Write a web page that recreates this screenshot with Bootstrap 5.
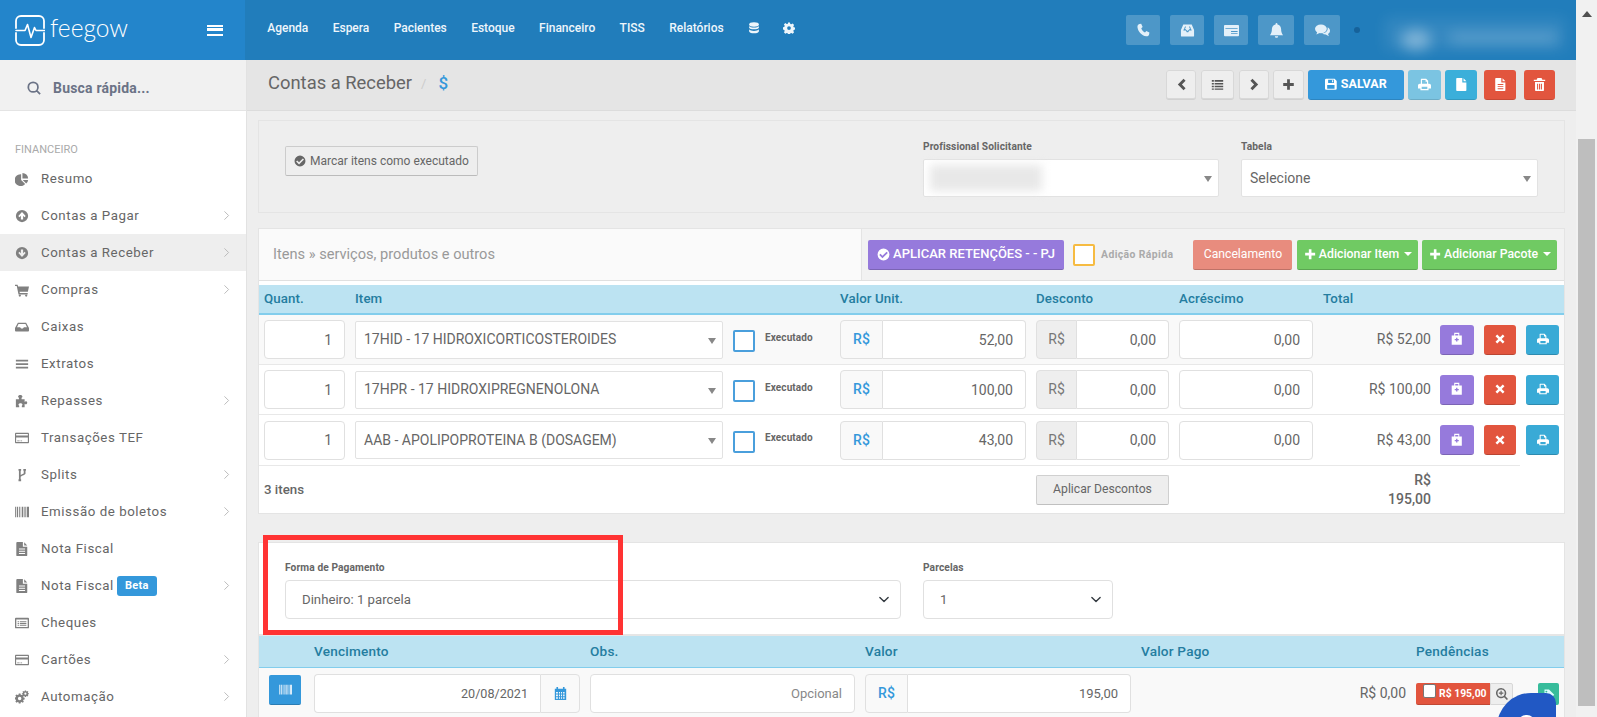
<!DOCTYPE html>
<html lang="pt-BR">
<head>
<meta charset="utf-8">
<title>Contas a Receber</title>
<link rel="stylesheet" href="https://cdn.jsdelivr.net/npm/bootstrap@5.3.0/dist/css/bootstrap.min.css">
<style>
html,body{height:100%;overflow:hidden}
body{font-family:Roboto,"Liberation Sans",sans-serif;font-size:13px;color:#666;background:#eee}
.ic{width:1em;height:1em;fill:currentColor;flex:none;display:inline-block;vertical-align:-.125em}
.shell{height:717px;width:1597px}
.frame{width:1576px;flex:none}
.fake-scroll{width:21px;background:#f1f1f1;flex:none;position:relative}
.fake-scroll i{display:block;width:0;height:0;border:5px solid transparent;border-bottom:6px solid #505050;border-top:0;margin:11px auto 0}
.fake-thumb{position:absolute;left:2px;width:17px;top:139px;height:567px;background:#bebebe}
.top-bar{height:60px;background:#217dbb;flex:none}
.brand-box{width:245px;background:#2385cb;color:#fff;padding-left:15px;padding-right:22px}
.brand-name{font-family:Lato,Roboto,sans-serif;font-weight:300;font-size:24.5px;line-height:1;margin-left:5px;padding-bottom:3px}
.burger{width:16px;height:11px;border-top:2.5px solid #fff;border-bottom:2.5px solid #fff;position:relative}
.burger::after{content:"";position:absolute;left:0;right:0;top:1.75px;height:2.5px;background:#fff}
.top-links{padding-left:10px;gap:0}
.top-links .nav-link{color:#eef6fb;font-size:12px;font-weight:500;padding:0 12.2px;line-height:60px;white-space:nowrap;margin-top:-2px}
.top-links .nav-link .ic{font-size:12px}
.top-tools{position:absolute;left:1126px;top:15px;gap:10px}
.tool-btn{height:30px;width:34px;background:rgba(255,255,255,.2);border-radius:2px;color:#e3f0f9;font-size:15px}
.dot-state{width:6px;height:6px;border-radius:50%;background:#16629a;margin:0 0 0 4px;align-self:center}
.blur-a,.blur-b,.blur-c{position:absolute;display:block;filter:blur(7px)}
.blur-a{left:1385px;top:18px;width:180px;height:32px;background:rgba(255,255,255,.09)}
.blur-b{left:1401px;top:30px;width:30px;height:20px;background:rgba(255,255,255,.38);border-radius:50%}
.blur-c{left:1450px;top:33px;width:106px;height:10px;background:rgba(255,255,255,.2)}
.side-col{width:247px;flex:none;background:#fff;border-right:1px solid #e2e2e2}
.quick-find{height:51px;background:#f1f1f1;border-bottom:1px solid #e4e4e4;padding-left:27px;padding-top:6px;color:#6b7386;font-weight:700;font-size:14px;gap:12px;letter-spacing:.2px}
.quick-find .ic{font-size:14px;color:#6b7386}
.side-title{font-size:11px;color:#aaa;padding:31px 0 0 15px;line-height:16px;height:50px;margin-bottom:-1px}
.side-item{height:37px;padding:0 15px;gap:0;color:#666;letter-spacing:.55px;font-size:13.3px;white-space:nowrap;text-decoration:none}
.side-item.is-on{background:#eee}
.side-ico{width:26px;flex:none;color:#808080;font-size:14px;display:flex}
.side-arrow{margin-left:auto;color:#b5b5b5;font-size:11px;margin-right:-1px}
.side-beta{background:#3498db;color:#fff;font-weight:700;font-size:11px;border-radius:3px;padding:0 8px;height:20px;line-height:20px;margin-left:3px;letter-spacing:.3px}
.content{flex:1;min-width:0}
.crumbs{height:51px;background:#e5e5e5;border-bottom:1px solid #dcdcdc;padding-left:21px;flex:none}
.crumb-title{font-size:18.4px;color:#666;margin-top:-5px}
.crumb-sep{color:#ccc;margin:-3px 12px 0 9px;font-size:13px}
.crumb-sym{color:#3498db;font-size:17px;font-weight:500;margin-top:-3px}
.act-row{position:absolute;left:1166px;top:70px;gap:4px}
.act{height:30px;padding:0;border-radius:3px;border:0;border-bottom:1px solid rgba(0,0,0,.12);color:#fff;font-size:13px;display:flex;align-items:center;justify-content:center}
.act-plain{background:#eee;color:#555;box-shadow:inset 0 0 0 1px #d8d8d8}
.w30{width:30px}.w33{width:33px}.w31{width:31px}.w32{width:32px}
.act-save{width:96px;background:#3498db;font-weight:700;font-size:12.5px;gap:3px}
.act-print{background:#7bc4e2}
.act-info{background:#3bafda}
.act-red{background:#e2553e}
.sheet{margin:0 11px;border:1px solid #e4e4e4;flex:none}
.sheet-a{margin-top:9px;height:93px;padding:19px 26px 0;background:#eee;display:grid;grid-template-columns:616px 296px 297px;column-gap:22px;align-items:start}
.mark-btn{align-self:start;width:193px;height:30px;padding:0;margin-top:6px;background:#eee;border:1px solid #ccc;border-bottom-color:#bbb;border-radius:2px;color:#666;font-size:12px;gap:4px}
.mini-label{font-size:10.2px;font-weight:700;color:#666;line-height:14px;margin:0 0 5px;display:block;letter-spacing:.1px}
.s2box{height:38px;background:#fff;border:1px solid #e2e2e2;border-radius:2px;padding-left:8px;position:relative;font-size:14px;color:#666;white-space:nowrap}
.s2box::after{content:"";position:absolute;right:6px;top:50%;margin-top:-2px;border-style:solid;border-color:#888 transparent transparent;border-width:6px 4.5px 0}
.smudge{display:block;width:112px;height:26px;background:#e8e8e8;filter:blur(5px);margin-left:-2px}
.sheet-b{margin-top:15px;background:#fff;height:286px}
.sheet-head{height:52px;border-bottom:1px solid #e0e0e0;background:#fafafa}
.sheet-head-txt{flex:1;padding-left:14px;font-size:14.6px;color:#999;padding-top:1px}
.sheet-head-tools{width:703px;background:#f2f2f2;border-left:1px solid #e4e4e4;padding-left:6px;gap:0}
.tbtn{height:30px;border:0;border-bottom:1px solid rgba(0,0,0,.18);border-radius:2px;color:#fff;font-size:12.3px;padding:0;display:flex;align-items:center;justify-content:center;gap:3px;white-space:nowrap}
.tbtn-purple{width:196px;background:#967adc;font-weight:500;font-size:13px}
.tbtn-cancel{width:99px;background:#e88c7e;margin-left:20px;font-weight:400;font-size:12.2px}
.tbtn-item{width:121px;background:#70ca63;margin-left:5px;font-weight:500}
.tbtn-pack{width:135px;background:#70ca63;margin-left:4px;font-weight:500}
.caret-mini{border:4px solid transparent;border-top:4px solid #fff;border-bottom:0;margin-left:2px}
.box-orange{width:22px;height:22px;border:2px solid #f6bb42;background:#fff;border-radius:2px;margin-left:9px;flex:none}
.quick-lbl{font-size:10.4px;font-weight:700;color:#aaa;margin-left:6px;letter-spacing:.4px;white-space:nowrap}
.gridline{display:grid;grid-template-columns:81px 368px 97px 186px 133px 134px 108px 118px;column-gap:10px;padding-left:5px;align-items:center}
.thead-line{margin-top:4px;height:30px;background:#bce3f2;border-bottom:2px solid #82cdec;color:#247da0;font-weight:500;font-size:13.3px;letter-spacing:.1px}
.tline{height:50px;border-bottom:1px solid #e8e8e8}
.tline.alt{background:#f9f9f9}
.tline.last{border-bottom:0}
.tfoot-line{height:48px;border-top:1px solid #e8e8e8;margin-right:44px;font-size:13.3px}
.fld{height:39px;border:1px solid #e0e0e0;border-radius:4px;background:#fff;color:#666;font-size:14px;text-align:right;padding:0 12px;box-shadow:none;line-height:37px}
.fld::placeholder{color:#888;opacity:1}
.fld-small{font-size:13px}
.fld-group{height:39px;flex-wrap:nowrap}
.fld-group .fld{border-radius:0 4px 4px 0;border-left:0;flex:1;min-width:0;margin-left:0 !important}
.pre{width:43px;height:39px;flex:none;background:#f9f9f9;border:1px solid #e0e0e0;border-radius:4px 0 0 4px;display:flex;align-items:center;justify-content:center;color:#3498db;font-weight:500;font-size:14px}
.pre.grey{width:41px;background:#eee;color:#777;font-weight:400}
.blue-box{width:22px;height:22px;border:2px solid #4a9fdc;border-radius:2px;background:#fff;flex:none;margin-top:3px}
.exec-lbl{font-size:10px;font-weight:700;color:#666;margin-left:10px;margin-top:-5px;letter-spacing:.1px}
.row-total{text-align:right;font-size:14px;color:#666}
.mini-act{height:30px;border:0;border-bottom:1px solid rgba(0,0,0,.18);border-radius:3px;color:#fff;padding:0;font-size:12px;display:flex;align-items:center;justify-content:center}
.act-trio{margin-left:-1px}
.bg-purple{background:#967adc;width:34px;font-size:13.5px}.bg-red{background:#e2553e;width:32px;margin-left:10px}.bg-info2{background:#39aad6;width:33px;margin-left:10px}
.apply-btn{height:30px;background:#eee;border:1px solid #d0d0d0;border-bottom-color:#c0c0c0;border-radius:2px;color:#666;font-size:12.2px;padding:0}
.sum-cell{text-align:right;font-size:14px;line-height:19px;font-weight:500;color:#666}
.sheet-c{margin:28px 11px 0;background:#fff;border:1px solid #e4e4e4;border-bottom:0;height:300px;flex:none}
.pay-top{height:93px;padding:18px 26px 0;display:grid;grid-template-columns:616px 190px;column-gap:22px;border-bottom:2px solid #e6e6e6}
.plain-select{height:39px;border:1px solid #e0e0e0;border-radius:4px;color:#666;font-size:13.2px;padding:0 16px;box-shadow:none;background-size:14px 11px;background-position:right 9px center}
.pay-head,.pay-line{display:grid;grid-template-columns:35px 266px 265px 266px 265px 1fr;column-gap:10px;padding-left:10px;padding-right:5px;align-items:center}
.pay-head{height:32px;background:#bce3f2;border-bottom:1px solid #82cdec;color:#247da0;font-weight:500;font-size:13.6px;letter-spacing:.2px}
.pay-line{height:50px;background:#f9f9f9}
.blue-square{width:32px;height:30px;background:#3498db;border:0;border-bottom:1px solid rgba(0,0,0,.18);border-radius:2px;color:#dcecf8;padding:0;font-size:13px;display:flex;align-items:center;justify-content:center;margin-top:-6px}
.pay-cal{width:40px;flex:none;height:39px;background:#f9f9f9;border:1px solid #e0e0e0;border-left:1px solid #e0e0e0;border-radius:0 4px 4px 0;color:#3498db;font-size:13px;display:flex;align-items:center;justify-content:center;margin-left:0 !important}
.fld-date{border-radius:4px 0 0 4px !important;border-left:1px solid #e0e0e0 !important;border-right:0;font-size:12.6px}
.pay-amt{font-size:14px;color:#666;text-align:right;white-space:nowrap;grid-column:5}
.pend-btn{width:74px;height:22px;background:#e2553e;color:#fff;font-weight:700;font-size:10.4px;border-radius:2px 0 0 2px;border-bottom:1px solid rgba(0,0,0,.15);padding-left:7px;gap:3px;white-space:nowrap}
.pend-box{width:13px;height:14px;background:#fff;border:1px solid #777;border-radius:2px;margin-top:-5px;flex:none}
.pend-zoom{width:23px;height:22px;background:#eee;border:1px solid #d8d8d8;border-radius:0 2px 2px 0;color:#666;font-size:12px}
.pend-green{width:21px;height:22px;background:#37bc9b;color:#dff;border-radius:2px;margin-left:25px;font-size:12px}
.red-frame{position:absolute;left:263px;top:535px;width:360px;height:100px;border:5px solid #ff3333;pointer-events:none}
.chat-bubble{position:absolute;left:1497px;top:693px;width:59px;height:70px;background:#2158c4;border-radius:34px 10px 0 0}
.chat-bubble::after{content:"";position:absolute;left:21px;top:22px;width:17px;height:14px;border-radius:8px 8px 0 0;background:#fff}
</style>
</head>
<body>
<svg width="0" height="0" class="position-absolute">
<defs>
<symbol id="i-phone" viewBox="0 0 16 16"><path d="M3.6 1.1 5.5.8l1.6 3.4-1.5 1.4c.6 1.9 2 3.5 4 4.4l1.4-1.6 3.3 1.6-.3 2c-.3 1.6-1.6 2.5-3.1 2.2C5.900 13 2.500 9.500 1.600 4.700 1.300 3.100 2.100 1.600 3.600 1.100z"/></symbol>
<symbol id="i-inbox" viewBox="0 0 16 16"><path fill-rule="evenodd" d="M3.500 1.500h9L15 7.500v6a1 1 0 0 1-1 1H2a1 1 0 0 1-1-1v-6zM5.500 3.500 3.500 8h2.700l1 1.800h1.600l1-1.800h2.700l-2-4.500H10V5.500h1.200L8 8.500 4.800 5.500H6V3.500z"/></symbol>
<symbol id="i-news" viewBox="0 0 16 16"><path fill-rule="evenodd" d="M1 2h14a1 1 0 0 1 1 1v10a1 1 0 0 1-1 1H1a1 1 0 0 1-1-1V3a1 1 0 0 1 1-1zm.500 3.500v1h13v-1zm6 3v1h7v-1zm0 2.300v1h7v-1z"/></symbol>
<symbol id="i-bell" viewBox="0 0 16 16"><path d="M8 0a1 1 0 0 1 1 1v.7c2.300.5 3.900 2.400 3.900 4.800 0 3.200.8 4.800 2.100 6.500H1c1.300-1.700 2.100-3.300 2.100-6.500C3.100 4.100 4.700 2.200 7 1.700V1a1 1 0 0 1 1-1zM6.200 14h3.600a1.800 1.800 0 0 1-3.600 0z"/></symbol>
<symbol id="i-chat" viewBox="0 0 16 16"><ellipse cx="6.300" cy="6.200" rx="6.300" ry="4.700"/><path d="M2.500 9 1.500 12.300 6 10z"/><path d="M13.500 4.500c1.600.9 2.500 2.200 2.500 3.700 0 1.500-.9 2.700-2.100 3.400l.9 2.500-3.300-1.800c-1.500 0-2.900-.4-3.900-1.200 3.400-.2 6.400-2.300 5.900-6.600z"/></symbol>
<symbol id="i-db" viewBox="0 0 16 16"><ellipse cx="8" cy="3.200" rx="6.500" ry="3"/><path d="M1.500 5.200c1 1.400 3.700 2.200 6.500 2.200s5.500-.8 6.500-2.200v2.300c-.6 1.500-3.400 2.300-6.500 2.300s-5.900-.8-6.500-2.300zM1.500 9.800c1 1.400 3.700 2.200 6.500 2.200s5.500-.8 6.500-2.200v2.700C14 14.200 11 15 8 15s-6-.8-6.500-2.500z"/></symbol>
<symbol id="i-cog" viewBox="0 0 16 16"><path fill-rule="evenodd" d="M6.700 1h2.600l.4 2 1.400.6 1.800-1.100 1.900 1.900-1.100 1.800.6 1.400 2 .4v2.600l-2 .4-.6 1.400 1.100 1.800-1.900 1.900-1.800-1.100-1.400.6-.4 2H6.700l-.4-2-1.400-.6-1.800 1.100-1.900-1.900 1.100-1.800-.6-1.400-2-.4V7.400l2-.4.6-1.400-1.100-1.800 1.900-1.900 1.800 1.100L6.300 3zM8 6a2.500 2.500 0 1 0 0 5 2.500 2.500 0 0 0 0-5z" transform="translate(0 -.5)"/></symbol>
<symbol id="i-search" viewBox="0 0 16 16"><path fill="none" stroke="currentColor" stroke-width="2" d="M7 1.500a5.500 5.500 0 1 1 0 11 5.500 5.500 0 0 1 0-11zM11 11l4 4"/></symbol>
<symbol id="i-pie" viewBox="0 0 16 16"><path d="M7 2.500V9l4.600 4.600A6.800 6.800 0 1 1 7 2.500z"/><path d="M8.500 1a6.800 6.800 0 0 1 6.500 6.500H8.500z"/><path d="M8.800 9h6.200a6.800 6.800 0 0 1-2.200 4.200z"/></symbol>
<symbol id="i-up" viewBox="0 0 16 16"><path fill-rule="evenodd" d="M8 1a7 7 0 1 1 0 14A7 7 0 0 1 8 1zm0 2.500L3.800 8l1.300 1.300 1.600-1.700V12h2.600V7.600l1.600 1.700L12.200 8z"/></symbol>
<symbol id="i-down" viewBox="0 0 16 16"><path fill-rule="evenodd" d="M8 1a7 7 0 1 1 0 14A7 7 0 0 1 8 1zm0 11.500L12.200 8l-1.300-1.300-1.600 1.700V4H6.700v4.400L5.100 6.700 3.800 8z"/></symbol>
<symbol id="i-cart" viewBox="0 0 16 16"><path d="M0 2h3l.5 2H16l-1.300 6H5.200l.3 1.300h9V13H4L2 3.500H0z"/><circle cx="5.500" cy="14.300" r="1.300"/><circle cx="12.800" cy="14.300" r="1.300"/></symbol>
<symbol id="i-tray" viewBox="0 0 16 16"><path d="M3.300 3h9.400L16 9v3a1 1 0 0 1-1 1H1a1 1 0 0 1-1-1V9zM4 4.500 2.300 8.300h3.500L7 9.800h2l1.200-1.500h3.500L12 4.500z" fill-rule="evenodd"/></symbol>
<symbol id="i-bars" viewBox="0 0 16 16"><path d="M1 3h14v2H1zM1 7h14v2H1zM1 11h14v2H1z"/></symbol>
<symbol id="i-puzzle" viewBox="0 0 16 16"><path d="M1 6h3.500V4.300c-.7-.3-1-1-1-1.500C3.500 1.800 4.600 1 6 1s2.500.8 2.500 1.800c0 .5-.3 1.200-1 1.500V6H11v3c.4-.5 1-.7 1.500-.7.800 0 1.500.7 1.500 1.700s-.7 1.700-1.500 1.700c-.5 0-1.100-.2-1.500-.7V15H7.800v-1.500c.5-.4.700-.8.700-1.300 0-.8-1-1.500-2.200-1.500s-2.300.7-2.300 1.500c0 .5.200.9.800 1.300V15H1z"/></symbol>
<symbol id="i-card" viewBox="0 0 16 16"><path fill-rule="evenodd" d="M1.200 2h13.600c.7 0 1.200.5 1.200 1.200v9.600c0 .7-.5 1.200-1.200 1.200H1.200C.5 14 0 13.500 0 12.800V3.200C0 2.500.5 2 1.200 2zM1.300 3.300V5h13.400V3.300zM1.300 7.300v5.400h13.400V7.300zM2.500 10.800h2.800v1H2.500zM6.300 10.800h1.800v1H6.300z"/></symbol>
<symbol id="i-branch" viewBox="0 0 16 16"><path d="M4 1h3v2.200H6.500V8c1.500-.8 3-1.200 3.500-2V3.200H9.500V1h3v2.200H12v3.500c-.6 1.300-3.500 2.100-5.500 3.200v3H7V15H4v-2.100h.5V3.200H4z"/></symbol>
<symbol id="i-barcode" viewBox="0 0 16 16"><path d="M0 2h1v12H0zM2 2h1.500v12H2zM4.500 2h1v12h-1zM6.500 2h.7v12h-.7zM8 2h1.500v12H8zM10.300 2h.7v12h-.7zM11.800 2h1v12h-1zM13.600 2H16v12h-2.400z"/></symbol>
<symbol id="i-doc" viewBox="0 0 16 16"><path fill-rule="evenodd" d="M2.500 0H9v5.500h5V15a1 1 0 0 1-1 1H2.500a1 1 0 0 1-1-1V1a1 1 0 0 1 1-1zm8 .3L14 4h-3.500zM4.500 7.500v1.200h7V7.500zm0 2.500v1.200h7V10zm0 2.500v1.200h7v-1.200z"/></symbol>
<symbol id="i-file" viewBox="0 0 16 16"><path d="M2.500 0H9v5.500h5V15a1 1 0 0 1-1 1H2.500a1 1 0 0 1-1-1V1a1 1 0 0 1 1-1zM10.500.3 14 4h-3.500z"/></symbol>
<symbol id="i-listalt" viewBox="0 0 16 16"><path fill-rule="evenodd" d="M1 2h14a1 1 0 0 1 1 1v10a1 1 0 0 1-1 1H1a1 1 0 0 1-1-1V3a1 1 0 0 1 1-1zm.500 2v8.500h13V4zM3 6h1.500v1H3zM5.500 6H13v1H5.500zM3 8h1.500v1H3zM5.500 8H13v1H5.500zM3 10h1.500v1H3zM5.500 10H13v1H5.500z"/></symbol>
<symbol id="i-cogs" viewBox="0 0 16 16"><path fill-rule="evenodd" d="M4.300 4h2l.3 1.300 1 .5L8.800 5l1.300 1.400-.8 1.100.4 1.100 1.300.3v2l-1.300.2-.4 1 .8 1.200L8.800 14.500l-1.200-.8-1 .4-.3 1.300h-2L4 14.100l-1-.4-1.200.8L.4 13.100l.8-1.200-.4-1-1.300-.2v-2l1.300-.3.400-1.100-.8-1.100L1.800 5l1.200.8 1-.5zM5.300 7.800a2 2 0 1 0 0 4 2 2 0 0 0 0-4z"/><path fill-rule="evenodd" d="M12 0h1.500l.2 1 .8.300.8-.6 1 1-.6.800.3.800 1 .2v1l-1 .2-.3.8.6.800-1 1-.8-.6-.8.3-.2 1H12l-.2-1-.8-.3-.8.6-1-1 .6-.8-.3-.8-1-.2v-1l1-.2.300-.8-.6-.8 1-1 .8.6.8-.3zm.7 2.600a1.300 1.300 0 1 0 0 2.600 1.300 1.300 0 0 0 0-2.600z" transform="translate(-.2 .5) scale(.95)"/></symbol>
<symbol id="i-chevl" viewBox="0 0 16 16"><path d="M10.500 1 13 3.500 8.500 8 13 12.500 10.500 15l-7-7z"/></symbol>
<symbol id="i-chevr" viewBox="0 0 16 16"><path d="M5.500 1 3 3.500 7.500 8 3 12.500 5.500 15l7-7z"/></symbol>
<symbol id="i-thin" viewBox="0 0 16 16"><path d="M5 2l6 6-6 6" fill="none" stroke="currentColor" stroke-width="1.300"/></symbol>
<symbol id="i-lines" viewBox="0 0 16 16"><path d="M1 2.500h2.500v2H1zM4.500 2.500H15v2H4.500zM1 6h2.500v2H1zM4.500 6H15v2H4.500zM1 9.500h2.500v2H1zM4.500 9.500H15v2H4.500zM1 13h2.500v1.500H1zM4.500 13H15v1.500H4.500z"/></symbol>
<symbol id="i-plus" viewBox="0 0 16 16"><path d="M6.300 1.500h3.400v4.800h4.800v3.400H9.700v4.800H6.300V9.700H1.500V6.300h4.800z"/></symbol>
<symbol id="i-times" viewBox="0 0 16 16"><path d="M4.300 2 8 5.700 11.700 2 14 4.300 10.300 8l3.700 3.700-2.300 2.300L8 10.300 4.300 14 2 11.700 5.700 8 2 4.300z"/></symbol>
<symbol id="i-print" viewBox="0 0 16 16"><path fill-rule="evenodd" d="M4 1h6l2.500 2.500V7h1.300c1.200 0 2.200 1 2.200 2.200V13h-3v2H3v-2H0V9.200C0 8 1 7 2.200 7H3.500V2A1 1 0 0 1 4 1zm.9 1.400V7h6.200V4.500H9.300V2.400zM4.500 10.800v2.800h7v-2.800z"/></symbol>
<symbol id="i-save" viewBox="0 0 16 16"><path fill-rule="evenodd" d="M1.500 1h10.800L15 3.700V13.500a1.500 1.500 0 0 1-1.500 1.500h-12A1.500 1.500 0 0 1 0 13.500v-11A1.500 1.500 0 0 1 1.500 1zM4 2.300v4h7.500v-4zM2.800 9v4.700h9.400V9zM9 3h1.500v2.500H9z"/></symbol>
<symbol id="i-trash" viewBox="0 0 16 16"><path fill-rule="evenodd" d="M5.500 0h5l1 2H15v1.800H1V2h3.500zM2.500 5h11v10a1 1 0 0 1-1 1h-9a1 1 0 0 1-1-1zM5 7v7h1.300V7zm2.400 0v7h1.300V7zm2.300 0v7H11V7z"/></symbol>
<symbol id="i-check" viewBox="0 0 16 16"><path fill-rule="evenodd" d="M8 .7a7.300 7.300 0 1 1 0 14.600A7.300 7.300 0 0 1 8 .7zm3.800 3.900L6.700 9.500 4.300 7.200 2.800 8.700l3.900 3.900 6.600-6.500z"/></symbol>
<symbol id="i-med" viewBox="0 0 16 16"><path fill-rule="evenodd" d="M5 1h6v3h3v11H2V4h3zm1.200 1.300V4h3.600V2.300zM7.200 6.800v1.600H5.600v1.400h1.600v1.600h1.600V9.800h1.600V8.400H8.800V6.800z"/></symbol>
<symbol id="i-cal" viewBox="0 0 16 16"><path fill-rule="evenodd" d="M3 0h2v2h6V0h2v2h2v14H1V2h2zM2.500 6v2h2.300V6zm3.600 0v2h1.300V6zm2.500 0v2h1.300V6zm2.600 0v2h1.800V6zM2.500 9.300v2h2.300v-2zm3.600 0v2h1.300v-2zm2.500 0v2h1.300v-2zm2.600 0v2h1.800v-2zM2.500 12.600v2h2.300v-2zm3.600 0v2h1.300v-2zm2.500 0v2h1.300v-2zm2.600 0v2h1.800v-2z"/></symbol>
<symbol id="i-zoom" viewBox="0 0 16 16"><path fill-rule="evenodd" d="M6.800 0a6.800 6.800 0 0 1 5.500 10.800L16 14.500 14.500 16l-3.700-3.700A6.800 6.800 0 1 1 6.800 0zm0 2a4.800 4.800 0 1 0 0 9.600 4.800 4.800 0 0 0 0-9.600zM6 3.800h1.600V6h2.200v1.600H7.600v2.200H6V7.600H3.800V6H6z"/></symbol>
<symbol id="i-tag" viewBox="0 0 16 16"><path fill-rule="evenodd" d="M2 2h6l7 7-6 6-7-7zm2.500 1.500a1.300 1.300 0 1 0 0 2.600 1.300 1.300 0 0 0 0-2.600z"/></symbol>
</defs>
</svg>

<div class="shell d-flex position-relative">
  <div class="frame d-flex flex-column">
    <header class="top-bar d-flex">
      <div class="brand-box d-flex align-items-center">
        <svg width="30" height="31" viewBox="0 0 30 31" fill="none" stroke="#fff" stroke-width="1.800" stroke-linecap="round" stroke-linejoin="round" class="flex-none"><path d="M1 13V6a5 5 0 0 1 5-5h18a5 5 0 0 1 5 5v7M29 18v7a5 5 0 0 1-5 5H6a5 5 0 0 1-5-5v-7"/><path d="M1 15.500h9l2.500-6 3.500 13 3.500-10 1.500 3h8.500" stroke-width="1.600"/></svg>
        <span class="brand-name">feegow</span>
        <span class="burger ms-auto"></span>
      </div>
      <nav class="navbar-nav flex-row top-links">
        <a class="nav-link" href="#">Agenda</a>
        <a class="nav-link" href="#">Espera</a>
        <a class="nav-link" href="#">Pacientes</a>
        <a class="nav-link" href="#">Estoque</a>
        <a class="nav-link" href="#">Financeiro</a>
        <a class="nav-link" href="#">TISS</a>
        <a class="nav-link" href="#">Relatórios</a>
        <a class="nav-link" href="#"><svg class="ic"><use href="#i-db"/></svg></a>
        <a class="nav-link" href="#" style="padding-left:11px"><svg class="ic"><use href="#i-cog"/></svg></a>
      </nav>
    </header>
    <div class="d-flex flex-grow-1" style="min-height:0">
      <aside class="side-col">
        <div class="quick-find d-flex align-items-center"><svg class="ic"><use href="#i-search"/></svg><span>Busca rápida...</span></div>
        <div class="side-title">FINANCEIRO</div>
        <a href="#" class="side-item d-flex align-items-center"><span class="side-ico"><svg class="ic"><use href="#i-pie"/></svg></span>Resumo</a>
        <a href="#" class="side-item d-flex align-items-center"><span class="side-ico"><svg class="ic"><use href="#i-up"/></svg></span>Contas a Pagar<svg class="ic side-arrow"><use href="#i-thin"/></svg></a>
        <a href="#" class="side-item is-on d-flex align-items-center"><span class="side-ico"><svg class="ic"><use href="#i-down"/></svg></span>Contas a Receber<svg class="ic side-arrow"><use href="#i-thin"/></svg></a>
        <a href="#" class="side-item d-flex align-items-center"><span class="side-ico"><svg class="ic"><use href="#i-cart"/></svg></span>Compras<svg class="ic side-arrow"><use href="#i-thin"/></svg></a>
        <a href="#" class="side-item d-flex align-items-center"><span class="side-ico"><svg class="ic"><use href="#i-tray"/></svg></span>Caixas</a>
        <a href="#" class="side-item d-flex align-items-center"><span class="side-ico"><svg class="ic"><use href="#i-bars"/></svg></span>Extratos</a>
        <a href="#" class="side-item d-flex align-items-center"><span class="side-ico"><svg class="ic"><use href="#i-puzzle"/></svg></span>Repasses<svg class="ic side-arrow"><use href="#i-thin"/></svg></a>
        <a href="#" class="side-item d-flex align-items-center"><span class="side-ico"><svg class="ic"><use href="#i-card"/></svg></span>Transações TEF</a>
        <a href="#" class="side-item d-flex align-items-center"><span class="side-ico"><svg class="ic"><use href="#i-branch"/></svg></span>Splits<svg class="ic side-arrow"><use href="#i-thin"/></svg></a>
        <a href="#" class="side-item d-flex align-items-center"><span class="side-ico"><svg class="ic"><use href="#i-barcode"/></svg></span>Emissão de boletos<svg class="ic side-arrow"><use href="#i-thin"/></svg></a>
        <a href="#" class="side-item d-flex align-items-center"><span class="side-ico"><svg class="ic"><use href="#i-doc"/></svg></span>Nota Fiscal</a>
        <a href="#" class="side-item d-flex align-items-center"><span class="side-ico"><svg class="ic"><use href="#i-doc"/></svg></span>Nota Fiscal<span class="side-beta">Beta</span><svg class="ic side-arrow"><use href="#i-thin"/></svg></a>
        <a href="#" class="side-item d-flex align-items-center"><span class="side-ico"><svg class="ic"><use href="#i-listalt"/></svg></span>Cheques</a>
        <a href="#" class="side-item d-flex align-items-center"><span class="side-ico"><svg class="ic"><use href="#i-card"/></svg></span>Cartões<svg class="ic side-arrow"><use href="#i-thin"/></svg></a>
        <a href="#" class="side-item d-flex align-items-center"><span class="side-ico"><svg class="ic"><use href="#i-cogs"/></svg></span>Automação<svg class="ic side-arrow"><use href="#i-thin"/></svg></a>
      </aside>
      <main class="content d-flex flex-column overflow-hidden">
        <div class="crumbs d-flex align-items-center">
          <span class="crumb-title">Contas a Receber</span><span class="crumb-sep">/</span><span class="crumb-sym">$</span>
        </div>

        <section class="sheet sheet-a">
          <button type="button" class="btn mark-btn d-flex align-items-center justify-content-center"><svg class="ic"><use href="#i-check"/></svg>Marcar itens como executado</button>
          <div><label class="mini-label">Profissional Solicitante</label><div class="s2box d-flex align-items-center"><span class="smudge"></span></div></div>
          <div><label class="mini-label">Tabela</label><div class="s2box d-flex align-items-center">Selecione</div></div>
        </section>

        <section class="sheet sheet-b">
          <div class="sheet-head d-flex">
            <div class="sheet-head-txt d-flex align-items-center">Itens » serviços, produtos e outros</div>
            <div class="sheet-head-tools d-flex align-items-center">
              <button type="button" class="btn tbtn tbtn-purple"><svg class="ic"><use href="#i-check"/></svg>APLICAR RETENÇÕES - - PJ</button>
              <span class="box-orange"></span><span class="quick-lbl">Adição Rápida</span>
              <button type="button" class="btn tbtn tbtn-cancel">Cancelamento</button>
              <button type="button" class="btn tbtn tbtn-item"><svg class="ic"><use href="#i-plus"/></svg>Adicionar Item<span class="caret-mini"></span></button>
              <button type="button" class="btn tbtn tbtn-pack"><svg class="ic"><use href="#i-plus"/></svg>Adicionar Pacote<span class="caret-mini"></span></button>
            </div>
          </div>
          <div class="gridline thead-line"><span>Quant.</span><span>Item</span><span></span><span>Valor Unit.</span><span>Desconto</span><span>Acréscimo</span><span>Total</span><span></span></div>

          <div class="gridline tline alt">
            <input class="form-control fld" value="1" aria-label="Quantidade">
            <div class="s2box d-flex align-items-center">17HID - 17 HIDROXICORTICOSTEROIDES</div>
            <div class="d-flex align-items-center"><span class="blue-box"></span><span class="exec-lbl">Executado</span></div>
            <div class="input-group fld-group"><span class="pre">R$</span><input class="form-control fld" value="52,00" aria-label="Valor"></div>
            <div class="input-group fld-group"><span class="pre grey">R$</span><input class="form-control fld" value="0,00" aria-label="Desconto"></div>
            <input class="form-control fld" value="0,00" aria-label="Acréscimo">
            <div class="row-total">R$ 52,00</div>
            <div class="d-flex act-trio"><button type="button" class="btn mini-act bg-purple"><svg class="ic"><use href="#i-med"/></svg></button><button type="button" class="btn mini-act bg-red"><svg class="ic"><use href="#i-times"/></svg></button><button type="button" class="btn mini-act bg-info2"><svg class="ic"><use href="#i-print"/></svg></button></div>
          </div>
          <div class="gridline tline">
            <input class="form-control fld" value="1" aria-label="Quantidade">
            <div class="s2box d-flex align-items-center">17HPR - 17 HIDROXIPREGNENOLONA</div>
            <div class="d-flex align-items-center"><span class="blue-box"></span><span class="exec-lbl">Executado</span></div>
            <div class="input-group fld-group"><span class="pre">R$</span><input class="form-control fld" value="100,00" aria-label="Valor"></div>
            <div class="input-group fld-group"><span class="pre grey">R$</span><input class="form-control fld" value="0,00" aria-label="Desconto"></div>
            <input class="form-control fld" value="0,00" aria-label="Acréscimo">
            <div class="row-total">R$ 100,00</div>
            <div class="d-flex act-trio"><button type="button" class="btn mini-act bg-purple"><svg class="ic"><use href="#i-med"/></svg></button><button type="button" class="btn mini-act bg-red"><svg class="ic"><use href="#i-times"/></svg></button><button type="button" class="btn mini-act bg-info2"><svg class="ic"><use href="#i-print"/></svg></button></div>
          </div>
          <div class="gridline tline last">
            <input class="form-control fld" value="1" aria-label="Quantidade">
            <div class="s2box d-flex align-items-center">AAB - APOLIPOPROTEINA B (DOSAGEM)</div>
            <div class="d-flex align-items-center"><span class="blue-box"></span><span class="exec-lbl">Executado</span></div>
            <div class="input-group fld-group"><span class="pre">R$</span><input class="form-control fld" value="43,00" aria-label="Valor"></div>
            <div class="input-group fld-group"><span class="pre grey">R$</span><input class="form-control fld" value="0,00" aria-label="Desconto"></div>
            <input class="form-control fld" value="0,00" aria-label="Acréscimo">
            <div class="row-total">R$ 43,00</div>
            <div class="d-flex act-trio"><button type="button" class="btn mini-act bg-purple"><svg class="ic"><use href="#i-med"/></svg></button><button type="button" class="btn mini-act bg-red"><svg class="ic"><use href="#i-times"/></svg></button><button type="button" class="btn mini-act bg-info2"><svg class="ic"><use href="#i-print"/></svg></button></div>
          </div>
          <div class="gridline tfoot-line">
            <strong style="grid-column:1/3;font-weight:500">3 itens</strong>
            <button type="button" class="btn apply-btn" style="grid-column:5">Aplicar Descontos</button>
            <div class="sum-cell" style="grid-column:7">R$<br>195,00</div>
          </div>
        </section>

        <section class="sheet-c">
          <div class="pay-top">
            <div><label class="mini-label">Forma de Pagamento</label><select class="form-select plain-select" aria-label="Forma de Pagamento"><option>Dinheiro: 1 parcela</option></select></div>
            <div><label class="mini-label">Parcelas</label><select class="form-select plain-select" aria-label="Parcelas"><option>1</option></select></div>
          </div>
          <div class="pay-head"><span></span><span>Vencimento</span><span>Obs.</span><span>Valor</span><span>Valor Pago</span><span>Pendências</span></div>
          <div class="pay-line">
            <button type="button" class="btn blue-square"><svg class="ic"><use href="#i-barcode"/></svg></button>
            <div class="input-group fld-group"><input class="form-control fld fld-date" value="20/08/2021" aria-label="Vencimento"><span class="pay-cal"><svg class="ic"><use href="#i-cal"/></svg></span></div>
            <input class="form-control fld fld-small" placeholder="Opcional" aria-label="Observação">
            <div class="input-group fld-group"><span class="pre">R$</span><input class="form-control fld fld-small" value="195,00" aria-label="Valor"></div>
            <div class="pay-amt">R$ 0,00</div>
            <div class="d-flex" style="margin-top:2px">
              <span class="pend-btn d-flex align-items-center"><span class="pend-box"></span>R$ 195,00</span>
              <span class="pend-zoom d-flex align-items-center justify-content-center"><svg class="ic"><use href="#i-zoom"/></svg></span>
              <span class="pend-green d-flex align-items-center justify-content-center"><svg class="ic"><use href="#i-tag"/></svg></span>
            </div>
          </div>
        </section>
      </main>
    </div>
  </div>
  <div class="fake-scroll"><i></i><span class="fake-thumb"></span></div>

  <div class="top-tools d-flex">
    <span class="tool-btn d-flex align-items-center justify-content-center"><svg class="ic"><use href="#i-phone"/></svg></span>
    <span class="tool-btn d-flex align-items-center justify-content-center"><svg class="ic"><use href="#i-inbox"/></svg></span>
    <span class="tool-btn d-flex align-items-center justify-content-center"><svg class="ic"><use href="#i-news"/></svg></span>
    <span class="tool-btn d-flex align-items-center justify-content-center" style="width:36px"><svg class="ic"><use href="#i-bell"/></svg></span>
    <span class="tool-btn d-flex align-items-center justify-content-center" style="width:36px"><svg class="ic"><use href="#i-chat"/></svg></span>
    <span class="dot-state"></span>
  </div>
  <span class="blur-a"></span><span class="blur-b"></span><span class="blur-c"></span>

  <div class="act-row d-flex">
    <button type="button" class="btn act act-plain w30"><svg class="ic"><use href="#i-chevl"/></svg></button>
    <button type="button" class="btn act act-plain w33" style="margin-left:1px"><svg class="ic"><use href="#i-lines"/></svg></button>
    <button type="button" class="btn act act-plain w30" style="margin-left:1px"><svg class="ic"><use href="#i-chevr"/></svg></button>
    <button type="button" class="btn act act-plain w31"><svg class="ic"><use href="#i-plus"/></svg></button>
    <button type="button" class="btn act act-save"><svg class="ic"><use href="#i-save"/></svg>SALVAR</button>
    <button type="button" class="btn act act-print w33"><svg class="ic"><use href="#i-print"/></svg></button>
    <button type="button" class="btn act act-info w32"><svg class="ic"><use href="#i-file"/></svg></button>
    <button type="button" class="btn act act-red w32" style="margin-left:3px"><svg class="ic"><use href="#i-doc"/></svg></button>
    <button type="button" class="btn act act-red w31" style="margin-left:4px"><svg class="ic"><use href="#i-trash"/></svg></button>
  </div>

  <div class="red-frame"></div>
  <div class="chat-bubble"></div>
</div>
<script src="https://cdn.jsdelivr.net/npm/bootstrap@5.3.0/dist/js/bootstrap.bundle.min.js"></script>
</body>
</html>
